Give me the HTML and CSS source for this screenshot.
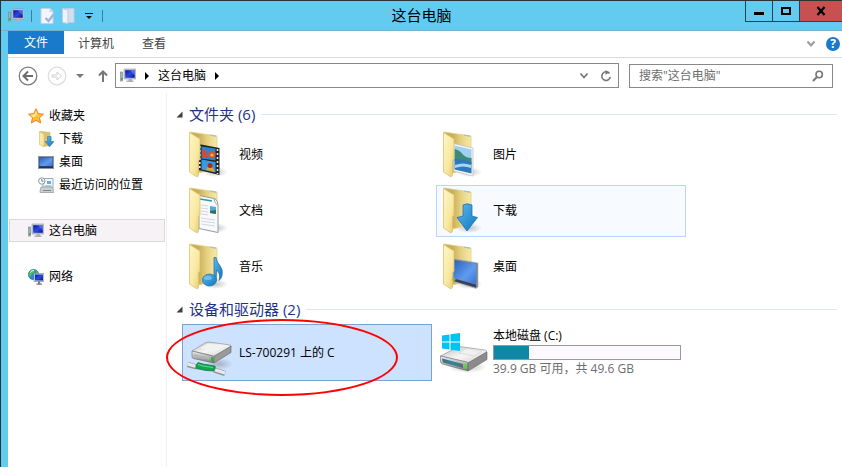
FILE: index.html
```html
<!DOCTYPE html>
<html lang="zh-CN">
<head>
    <meta charset="UTF-8">
    <meta name="viewport" content="width=device-width, initial-scale=1.0">
    <title>这台电脑</title>
    <link rel="stylesheet" href="styles.css">
</head>
<body>
    <!-- shared icon shapes -->
    <svg class="defs" width="0" height="0" aria-hidden="true">
        <defs>
            <linearGradient id="gBack" x1="0" y1="0" x2="1" y2="0">
                <stop offset="0.3" stop-color="#c9ad57"/>
                <stop offset="0.65" stop-color="#e6d384"/>
                <stop offset="1" stop-color="#f6eaa9"/>
            </linearGradient>
            <linearGradient id="gFront" x1="0" y1="0" x2="1" y2="1">
                <stop offset="0" stop-color="#fff6c8"/>
                <stop offset="0.6" stop-color="#f8e8a0"/>
                <stop offset="1" stop-color="#e6c968"/>
            </linearGradient>
            <linearGradient id="gBlue" x1="0" y1="0" x2="1" y2="1">
                <stop offset="0" stop-color="#5fb9ee"/>
                <stop offset="1" stop-color="#0d76bf"/>
            </linearGradient>
            <linearGradient id="gScreen" x1="0" y1="0" x2="1" y2="1">
                <stop offset="0" stop-color="#0712a8"/>
                <stop offset="0.5" stop-color="#2a48e0"/>
                <stop offset="1" stop-color="#0b159c"/>
            </linearGradient>
            <linearGradient id="gDesk" x1="0" y1="0" x2="1" y2="1">
                <stop offset="0" stop-color="#2c5fb8"/>
                <stop offset="0.6" stop-color="#5f9bf0"/>
                <stop offset="1" stop-color="#3873d0"/>
            </linearGradient>
            <linearGradient id="gTop" x1="0" y1="0" x2="1" y2="1">
                <stop offset="0" stop-color="#b9b9b9"/>
                <stop offset="0.5" stop-color="#f6f6f6"/>
                <stop offset="1" stop-color="#cfcfcf"/>
            </linearGradient>
            <linearGradient id="gSide" x1="0" y1="0" x2="0" y2="1">
                <stop offset="0" stop-color="#f0f0f0"/>
                <stop offset="1" stop-color="#7d7d7d"/>
            </linearGradient>
            <linearGradient id="gTeal" x1="0" y1="0" x2="1" y2="0">
                <stop offset="0" stop-color="#4d6570"/>
                <stop offset="0.5" stop-color="#2c87a3"/>
                <stop offset="1" stop-color="#5b6b70"/>
            </linearGradient>
            <radialGradient id="gShadow">
                <stop offset="0" stop-color="#777" stop-opacity="0.45"/>
                <stop offset="1" stop-color="#777" stop-opacity="0"/>
            </radialGradient>
            <symbol id="pc" viewBox="0 0 16 16">
                <rect x="0.5" y="4" width="2" height="9" fill="#a9b0b3" stroke="#7b8488" stroke-width="0.6"/>
                <rect x="1" y="10" width="1.6" height="2" fill="#3fae3a"/>
                <rect x="4" y="1" width="12" height="10" rx="0.6" fill="#c5cbd0" stroke="#8c969c" stroke-width="0.6"/>
                <rect x="5.2" y="2.2" width="9.6" height="7.6" fill="url(#gScreen)"/>
                <path d="M10 2.2h4.8v5z" fill="#6f8cf5" opacity="0.6"/>
                <path d="M8.5 11h3.4v1.6h1.6v1.4h-7v-1.4h2z" fill="#aab1b5"/>
            </symbol>
            <symbol id="folder" viewBox="-2 0 48 48" overflow="visible">
                <ellipse cx="27" cy="41" rx="13" ry="5" fill="url(#gShadow)"/>
                <path d="M2 1l27 4v33l-19 4z" fill="url(#gBack)" stroke="#e3cd83" stroke-width="0.8"/>
                <path d="M22 4.5v-1l6 1v1.4z" fill="#9fc3c9"/>
            </symbol>
            <symbol id="folderFront" viewBox="-2 0 48 48">
                <path d="M1.5 1.5L12 8v20l-1.5 2v14L9 46l-7.5-5z" fill="url(#gFront)" stroke="#dcc16c" stroke-width="0.8"/>
            </symbol>
        </defs>
    </svg>

    <div class="window">
        <header class="titlebar">
            <div class="quick">
                <svg class="icon" viewBox="0 0 16 16"><use href="#pc"/></svg>
                <span class="sep"></span>
                <button class="tool" aria-label="属性">
                    <svg class="icon" viewBox="0 0 16 16"><path d="M2 .5h9l3 3v12H2z" fill="#f2f5fb" stroke="#c3d0e4"/><path d="M11 .5v3h3" fill="#d7e0ef" stroke="#c3d0e4"/><path d="M6.500 10l3 3 5-6.500" fill="none" stroke="#9fb4d6" stroke-width="2.400"/></svg>
                </button>
                <button class="tool" aria-label="新建文件夹">
                    <svg class="icon" viewBox="0 0 16 16"><path d="M4 .5h9v14H4z" fill="#d3dff0" stroke="#bccce4"/><path d="M1.500 .5L7 2v13.500l-5.500-1z" fill="#eef3fa" stroke="#bccce4"/></svg>
                </button>
                <button class="tool small" aria-label="自定义快速访问工具栏">
                    <svg width="8" height="8" viewBox="0 0 8 8"><path d="M0 1.500h8" stroke="#111"/><path d="M1 4h6L4 7z" fill="#111"/></svg>
                </button>
                <span class="sep"></span>
            </div>
            <h1 class="title">这台电脑</h1>
            <div class="controls">
                <button class="control" aria-label="最小化"><svg width="10" height="10" viewBox="0 0 10 10"><path d="M0 7.500h10" stroke="#000" stroke-width="3"/></svg></button>
                <button class="control" aria-label="最大化"><svg width="10" height="10" viewBox="0 0 10 10"><path d="M1 2h8v6H1z" fill="none" stroke="#000" stroke-width="2"/></svg></button>
                <button class="control close" aria-label="关闭"><svg width="10" height="10" viewBox="0 0 10 10"><path d="M1.500 1l7 8M8.500 1l-7 8" stroke="#000" stroke-width="2.200"/></svg></button>
            </div>
        </header>

        <div class="content">
            <nav class="ribbon">
                <button class="tab file">文件</button>
                <button class="tab">计算机</button>
                <button class="tab">查看</button>
                <button class="expand" aria-label="展开功能区"><svg width="10" height="8" viewBox="0 0 10 8"><path d="M1.500 1.500L5 5.500l3.500-4" fill="none" stroke="#9b9b9b" stroke-width="2"/></svg></button>
                <button class="help" aria-label="帮助">?</button>
            </nav>

            <div class="toolbar">
                <button class="nav-btn" aria-label="后退"><svg width="20" height="20" viewBox="0 0 20 20"><circle cx="10" cy="10" r="8.800" fill="none" stroke="#7d7d7d" stroke-width="1.300"/><path d="M15 10H6M10 5.500L5.500 10l4.500 4.500" fill="none" stroke="#6b6b6b" stroke-width="2"/></svg></button>
                <button class="nav-btn" aria-label="前进"><svg width="20" height="20" viewBox="0 0 20 20"><circle cx="10" cy="10" r="8.800" fill="none" stroke="#dcdcdc" stroke-width="1.200"/><path d="M5 9h5V6l4.500 4-4.500 4v-3H5z" fill="none" stroke="#d3d3d3"/></svg></button>
                <button class="nav-btn recent" aria-label="最近浏览的位置"><svg width="8" height="6" viewBox="0 0 8 6"><path d="M0 1h8L4 5z" fill="#7a7a7a"/></svg></button>
                <button class="nav-btn up" aria-label="上移"><svg width="10" height="14" viewBox="0 0 10 14"><path d="M5 13V3M1 6.500l4-4 4 4" fill="none" stroke="#777" stroke-width="2"/></svg></button>
                <div class="address">
                    <svg class="icon" viewBox="0 0 16 16"><use href="#pc"/></svg>
                    <svg class="arrow" viewBox="0 0 4 8"><path d="M0 0l4 4-4 4z"/></svg>
                    <a href="#">这台电脑</a>
                    <svg class="arrow" viewBox="0 0 4 8"><path d="M0 0l4 4-4 4z"/></svg>
                    <button class="addr-btn first" aria-label="以前的位置"><svg width="10" height="8" viewBox="0 0 10 8"><path d="M1.500 1.500L5 5.500l3.500-4" fill="none" stroke="#777" stroke-width="1.800"/></svg></button>
                    <button class="addr-btn" aria-label="刷新"><svg width="12" height="12" viewBox="0 0 12 12"><path d="M9.500 3.500A4.300 4.300 0 1 0 10.300 7" fill="none" stroke="#777" stroke-width="1.600"/><path d="M5.500 0v4.800L9.500 2.500z" fill="#777"/></svg></button>
                </div>
                <form class="search">
                    <input type="text" aria-label="搜索" placeholder='搜索"这台电脑"'>
                    <button type="button" aria-label="开始搜索"><svg width="12" height="12" viewBox="0 0 12 12"><circle cx="7.200" cy="4.500" r="3.200" fill="none" stroke="#777" stroke-width="1.600"/><path d="M5 7L1 11" stroke="#777" stroke-width="2"/></svg></button>
                </form>
            </div>

            <div class="panes">
                <nav class="sidebar">
                    <a class="node" href="#">
                        <svg class="icon" viewBox="0 0 16 16"><path d="M8 .8l2.200 4.800 5.200.6-3.900 3.500 1.100 5.300L8 12.300 3.400 15l1.100-5.300L.6 6.200l5.200-.6z" fill="#ffbd3a" stroke="#e8811c"/><path d="M8 2.500l1.300 4L5.500 9.500 2.500 7l3.800-.7z" fill="#ffe88c"/></svg>
                        收藏夹
                    </a>
                    <a class="node child" href="#">
                        <svg class="icon" viewBox="0 0 16 16"><path d="M2 .5l10 1v13l-7 1z" fill="#dcc374" stroke="#cfae52" stroke-width="0.600"/><path d="M1.500 .5L6 3v12.500l-4.500-2z" fill="#f9e9a5" stroke="#d8bb62" stroke-width="0.600"/><path d="M9.500 5.500h3.600v5H16L11.600 15.800 7 10.500h2.500z" fill="url(#gBlue)" stroke="#1a70b0" stroke-width="0.500"/></svg>
                        下载
                    </a>
                    <a class="node child" href="#">
                        <svg class="icon" viewBox="0 0 16 16"><rect x="0.500" y="2.500" width="15" height="12" fill="#46566e" stroke="#8b97a6"/><rect x="1.500" y="3.500" width="13" height="8.500" fill="url(#gDesk)"/><path d="M1 13.200h14" stroke="#24324a" stroke-width="1.500"/></svg>
                        桌面
                    </a>
                    <a class="node child" href="#">
                        <svg class="icon" viewBox="0 0 16 16"><path d="M5 1.500h10v10H5z" fill="#f6f9fc" stroke="#99a8b5"/><path d="M9 4h4v3H9z" fill="#58b4e4"/><path d="M6.500 9h7" stroke="#8a9aa8"/><path d="M3 10h11l2 4v1.500H2V14z" fill="#c9d0d5" stroke="#8e989f" stroke-width="0.700"/><path d="M5 13.500h8" stroke="#7a858c"/><circle cx="3.800" cy="4" r="3.200" fill="#fff" stroke="#8797a3"/><path d="M3.800 2v2.200h1.700" fill="none" stroke="#4c5b66" stroke-width="0.800"/></svg>
                        最近访问的位置
                    </a>
                    <a class="node group active" href="#">
                        <svg class="icon" viewBox="0 0 16 16"><use href="#pc"/></svg>
                        这台电脑
                    </a>
                    <a class="node group" href="#">
                        <svg class="icon" viewBox="0 0 16 16"><circle cx="5.500" cy="5.500" r="5.200" fill="#2f86d6" stroke="#1c62a8" stroke-width="0.500"/><path d="M2 2.500Q4 0 7 .8L6 4 3.500 5 3 8 .6 6zM8 1.500l2.500 3L8 6z" fill="#55c240"/><path d="M2 3.500Q4 1 6 1.500" stroke="#d4f2ff" fill="none"/><rect x="6" y="4.500" width="10" height="8" fill="#d3dade" stroke="#7f8b92" stroke-width="0.600"/><rect x="7" y="5.500" width="8" height="6" fill="url(#gScreen)"/><path d="M10 12.500h2.200v2H14v1.300H8.500v-1.300H10z" fill="#6f7b83"/></svg>
                        网络
                    </a>
                </nav>

                <main class="main">
                    <h2 class="section"><svg class="toggle" viewBox="0 0 7 7"><path d="M6.500 .5v6h-6z"/></svg>文件夹 (6)</h2>
                    <div class="tiles">
                        <a class="tile" href="#">
                            <svg class="big" viewBox="0 0 48 48">
                                <use href="#folder"/>
                                <path d="M12.500 13l21 4v27l-21-5z" fill="#222"/>
                                <path d="M15.500 15.500l14 2v12l-14-2z" fill="#2b84cf"/><path d="M15.500 28.500l14 2.500v10.500l-14-3z" fill="#3a9ae0"/>
                                <path d="M16 26v-6l3-2 2 4 1 5z" fill="#d14a3b"/><circle cx="26" cy="23.500" r="3.500" fill="#e0522b"/><circle cx="26" cy="24" r="1.600" fill="#f3b53c"/>
                                <path d="M20 39l2-4 5 2 2 4z" fill="#e0a42b"/><circle cx="24" cy="34.500" r="2.500" fill="#a82d1e"/>
                                <path d="M31.500 18v25M13.800 15v24" stroke="#e8e8e8" stroke-width="1.600" stroke-dasharray="2 2"/>
                                <use href="#folderFront"/>
                            </svg>
                            <span class="name">视频</span>
                        </a>
                        <a class="tile" href="#">
                            <svg class="big" viewBox="0 0 48 48">
                                <use href="#folder"/>
                                <path d="M13.500 12.500L33 17v28l-19.500-5z" fill="#f7f7f7" stroke="#bbb" stroke-width="0.700"/>
                                <path d="M14.500 14.500L31.500 18.500v13l-17-3z" fill="#9fd0f3"/><path d="M14.500 18q5 1 8 5t9 4v6l-17-3z" fill="#3c8a78"/><path d="M14.500 28q9 0 17 3v11.500l-17-4z" fill="#2e78bd"/><path d="M15 34q8-3 16 0v3q-8-3-16 0z" fill="#a3d9f2"/>
                                <use href="#folderFront"/>
                            </svg>
                            <span class="name">图片</span>
                        </a>
                        <a class="tile" href="#">
                            <svg class="big" viewBox="0 0 48 48">
                                <use href="#folder"/>
                                <path d="M13 8.500l15 3q4 1 4 8v26l-19-4z" fill="#f8f9fb" stroke="#8b949c" stroke-width="0.900"/>
                                <path d="M28 11.500q0 4 4 7" fill="none" stroke="#9da7af"/>
                                <path d="M14 12l12 2" stroke="#2c9aa5" stroke-width="1.500"/><path d="M24 19l6 1v7l-6-1z" fill="#56a7de"/><path d="M24 24l6-1v4l-6-1z" fill="#386f55"/>
                                <path d="M15 18l7 1M15 21l7 1M15 24l7 1M15 27l7 1M15 31l14 2M15 34l14 2M15 37l14 2" stroke="#d3d8df"/>
                                <use href="#folderFront"/>
                            </svg>
                            <span class="name">文档</span>
                        </a>
                        <a class="tile hover" href="#">
                            <svg class="big" viewBox="0 0 48 48">
                                <use href="#folder"/>
                                <path d="M23 18q4-2.500 9 0v11l5.500 1.500L27 44 17 30.500l6-1.500z" fill="url(#gBlue)" stroke="#176ca8" stroke-width="0.700"/>
                                <use href="#folderFront"/>
                            </svg>
                            <span class="name">下载</span>
                        </a>
                        <a class="tile" href="#">
                            <svg class="big" viewBox="0 0 48 48">
                                <use href="#folder"/>
                                <use href="#folderFront"/>
                                <path d="M28 14.500h2q1 5 3.500 7.500 4 5 2.500 10.500-.5 3-3 5 2-7-2.500-10.500l-.5 11h-2z" fill="url(#gBlue)" stroke="#1a6ca5" stroke-width="0.700"/>
                                <ellipse cx="23.500" cy="37" rx="7" ry="6" fill="url(#gBlue)" stroke="#1a6ca5" stroke-width="0.700"/>
                                <ellipse cx="22" cy="35" rx="4" ry="2" fill="#8fd3f5" opacity="0.600"/>
                            </svg>
                            <span class="name">音乐</span>
                        </a>
                        <a class="tile" href="#">
                            <svg class="big" viewBox="0 0 48 48">
                                <use href="#folder"/>
                                <path d="M13.500 15.500L38 20v24l-2 1.500-22.500-7z" fill="#7b8592" stroke="#b3bac2" stroke-width="0.700"/>
                                <path d="M13.500 17l22.500 4v20l-22.500-6z" fill="url(#gDesk)"/><path d="M13.500 35.500L36 41.500v3l-22.500-6.500z" fill="#36425a"/>
                                <use href="#folderFront"/>
                                <circle cx="14" cy="36.500" r="1.500" fill="#8ab63e"/>
                            </svg>
                            <span class="name">桌面</span>
                        </a>
                    </div>

                    <h2 class="section"><svg class="toggle" viewBox="0 0 7 7"><path d="M6.500 .5v6h-6z"/></svg>设备和驱动器 (2)</h2>
                    <div class="tiles drives">
                        <a class="tile selected" href="#">
                            <svg class="big" viewBox="0 0 48 48">
                                <ellipse cx="33" cy="35" rx="14" ry="6" fill="url(#gShadow)"/>
                                <path d="M6 22l13-8q2-1 4-1l21 3q1.500.5 1 2L28 27z" fill="url(#gTop)" stroke="#888" stroke-width="0.600"/>
                                <path d="M6 22l20.500 5q1.500.5 1.500 2V34L7.500 29.500Q6 29 6 27.500z" fill="url(#gSide)" stroke="#666" stroke-width="0.600"/>
                                <path d="M28 27.500L45 17v6.500L28 34z" fill="#9a9a9a" stroke="#666" stroke-width="0.600"/>
                                <path d="M8 25l15 4v1.500L8 27z" fill="#b4b4b4"/><path d="M25 28l2 .5v4.500l-2-.5z" fill="#26b52e"/>
                                <path d="M14 19l8-4.500 16 2.500-9 5z" fill="#f2f2f2"/>
                                <path d="M1.500 35.500l9 2.500M28 41l11 3.500" stroke="#8f979b" stroke-width="5"/>
                                <path d="M1.500 35l9 2.500M28 40.500l11 3.500" stroke="#e6eaec" stroke-width="3"/>
                                <path d="M12 33.500l5 1.500 12 2q1 2-1 5l-8-.5-10-2q-1-3 2-6z" fill="#16a453" stroke="#087237" stroke-width="0.700"/>
                                <path d="M12 35.500l5 1.500 10 1.500" stroke="#66d98d" fill="none"/>
                            </svg>
                            <span class="name">LS-700291 上的 C</span>
                            <span class="mark"></span>
                        </a>
                        <a class="tile" href="#">
                            <svg class="big" viewBox="0 0 48 48">
                                <ellipse cx="27" cy="38" rx="20" ry="6" fill="url(#gShadow)"/>
                                <path d="M.5 27L17 18.500q2-1 4-.8L45 21q2 .5 1.500 2L28 34z" fill="url(#gTop)" stroke="#888" stroke-width="0.600"/>
                                <path d="M.5 27L27 33q1 .5 1 2v7L2.500 35Q.5 34.500 .5 32z" fill="url(#gSide)" stroke="#666" stroke-width="0.600"/>
                                <path d="M28 34l19-11v7.500L28 42z" fill="#8b8b8b" stroke="#666" stroke-width="0.600"/>
                                <path d="M2 29.500l21 5.500v4L3 33.500z" fill="url(#gTeal)"/><path d="M24.500 34.500l2 .5v5l-2-.5z" fill="#4be01e"/>
                                <path d="M19 24l7-4.500 16 2.500-8 5z" fill="#f0f0f0" stroke="#c8c8c8" stroke-width="0.500"/>
                                <path d="M2 6.500l7.500-1v7H2zM10.500 5.300l9.500-1.300v8.500h-9.500zM2 13.500h7.500v7l-7.500-1zM10.500 13.500H20V22l-9.500-1.300z" fill="#00c3f5"/>
                            </svg>
                            <span class="drive">
                                <span class="name">本地磁盘 (C:)</span>
                                <span class="bar"><span class="used" style="width: 19%"></span></span>
                                <span class="free">39.9 GB 可用，共 49.6 GB</span>
                            </span>
                        </a>
                    </div>
                </main>
            </div>
        </div>
    </div>
</body>
</html>
```
FILE: styles.css
```css
* {
    box-sizing: border-box;
}
body {
    margin: 0;
    font-family: "Open Sans", "Noto Sans CJK SC", sans-serif;
    font-size: 12px;
    line-height: 18px;
    color: #000;
    background-color: #fff;
}
button {
    display: flex;
    align-items: center;
    justify-content: center;
    margin: 0;
    padding: 0;
    border: none;
    background: none;
    font: inherit;
    color: inherit;
}
a {
    color: inherit;
    text-decoration: none;
}
svg {
    display: block;
    flex-shrink: 0;
}
.defs {
    position: absolute;
}
.icon {
    width: 16px;
    height: 16px;
}
.window {
    display: flex;
    flex-direction: column;
    min-height: 100vh;
    border-top: 1px solid #2c3337;
    border-left: 1px solid #2c3337;
    background-color: #63caf0;
}

/* title bar */
.titlebar {
    display: grid;
    grid-template-columns: 1fr auto 1fr;
    height: 30px;
    border-bottom: 1px solid #6fb1cf;
}
.quick {
    display: flex;
    align-items: center;
    gap: 6px;
    padding-left: 7px;
}
.sep {
    width: 1px;
    height: 12px;
    margin: 0 1px;
    background-color: #3d7e9c;
}
.tool.small {
    margin: 0 2px;
}
.title {
    margin: 0;
    font-size: 15px;
    font-weight: normal;
    line-height: 28px;
}
.controls {
    display: flex;
    justify-content: flex-end;
    align-items: flex-start;
}
.control {
    width: 27px;
    height: 21px;
    border: 1px solid #24424f;
    border-top: none;
    border-right: none;
}
.control.close {
    width: 43px;
    background-color: #c75050;
}

/* ribbon */
.content {
    flex: 1;
    display: flex;
    flex-direction: column;
    margin-left: 7px;
    background-color: #fff;
}
.ribbon {
    display: flex;
    align-items: center;
    height: 27px;
    padding-bottom: 3px;
    border-bottom: 1px solid #d9d9d9;
}
.tab {
    height: 23px;
    padding: 2px 14px 0;
    color: #444;
}
.tab.file {
    padding: 0 16px;
    background-color: #1979ca;
    color: #fff;
}
.expand {
    margin: 3px 0 0 auto;
}
.help {
    width: 14px;
    height: 14px;
    margin: 3px 2px 0 10px;
    border-radius: 50%;
    background-color: #1979ca;
    color: #fff;
    font-weight: bold;
    line-height: 14px;
}

/* address row */
.toolbar {
    display: flex;
    align-items: center;
    height: 35px;
    padding: 0 9px 0 10px;
}
.nav-btn {
    margin-right: 9px;
}
.nav-btn.recent {
    margin-right: 14px;
}
.nav-btn.up {
    margin-right: 7px;
}
.address {
    flex: 5;
    display: flex;
    align-items: center;
    height: 25px;
    padding: 0 6px 0 4px;
    border: 1px solid #888;
}
.address .arrow {
    width: 4px;
    height: 8px;
    margin: 0 9px;
}
.addr-btn {
    margin-left: 11px;
}
.addr-btn.first {
    margin-left: auto;
}
.search {
    flex: 0 1 204px;
    display: flex;
    align-items: center;
    height: 24px;
    margin-left: 10px;
    padding: 0 8px 0 9px;
    border: 1px solid #888;
}
.search input {
    flex: 1;
    min-width: 0;
    padding: 0;
    border: none;
    outline: none;
    background: none;
    font: inherit;
}
.search input::placeholder {
    color: #6d6d6d;
    opacity: 1;
}

/* navigation pane */
.panes {
    flex: 1;
    display: flex;
}
.sidebar {
    width: 159px;
    padding: 11px 1px 0;
    border-right: 1px solid #f0f0f0;
}
.node {
    display: flex;
    align-items: center;
    gap: 5px;
    height: 23px;
    padding-left: 18px;
    border: 1px solid transparent;
}
.node.child {
    padding-left: 28px;
}
.node.group {
    margin-top: 23px;
}
.node.active {
    border-color: #dcd9dc;
    background-color: #f6f2f6;
}

/* main pane */
.main {
    flex: 1;
    padding-top: 10px;
}
.section {
    display: flex;
    align-items: center;
    gap: 6px;
    margin: 0 5px 4px 9px;
    color: #1e3287;
    font-size: 15px;
    font-weight: normal;
    line-height: 22px;
}
.section::after {
    content: "";
    flex: 1;
    height: 1px;
    background-color: #dce8f5;
}
.toggle {
    width: 7px;
    height: 7px;
    fill: #404040;
}
.tiles {
    display: grid;
    grid-template-columns: repeat(auto-fill, 250px);
    grid-auto-rows: 52px;
    gap: 4px;
    margin: 0 0 5px 15px;
}
.tiles.drives {
    grid-auto-rows: 57px;
}
.tile {
    position: relative;
    display: flex;
    align-items: center;
    gap: 5px;
    padding: 0 4px 0 3px;
    border: 1px solid transparent;
}
.tile.hover {
    border-color: #b8d6fb;
    background-color: #f7fbff;
}
.tile.selected {
    border-color: #7da2ce;
    background-color: #cde2ff;
}
.big {
    width: 48px;
    height: 48px;
}
.drive {
    flex: 1;
    display: flex;
    flex-direction: column;
}
.bar {
    height: 15px;
    border: 1px solid #999;
    background-color: #fdfaff;
}
.used {
    display: block;
    height: 100%;
    background-color: #0d88a6;
}
.free {
    color: #6d6d6d;
}
/* red ring round the mapped drive */
.mark {
    position: absolute;
    top: -6px;
    left: -17px;
    width: 232px;
    height: 77px;
    border: 2px solid #f00;
    border-radius: 50%;
}
```
